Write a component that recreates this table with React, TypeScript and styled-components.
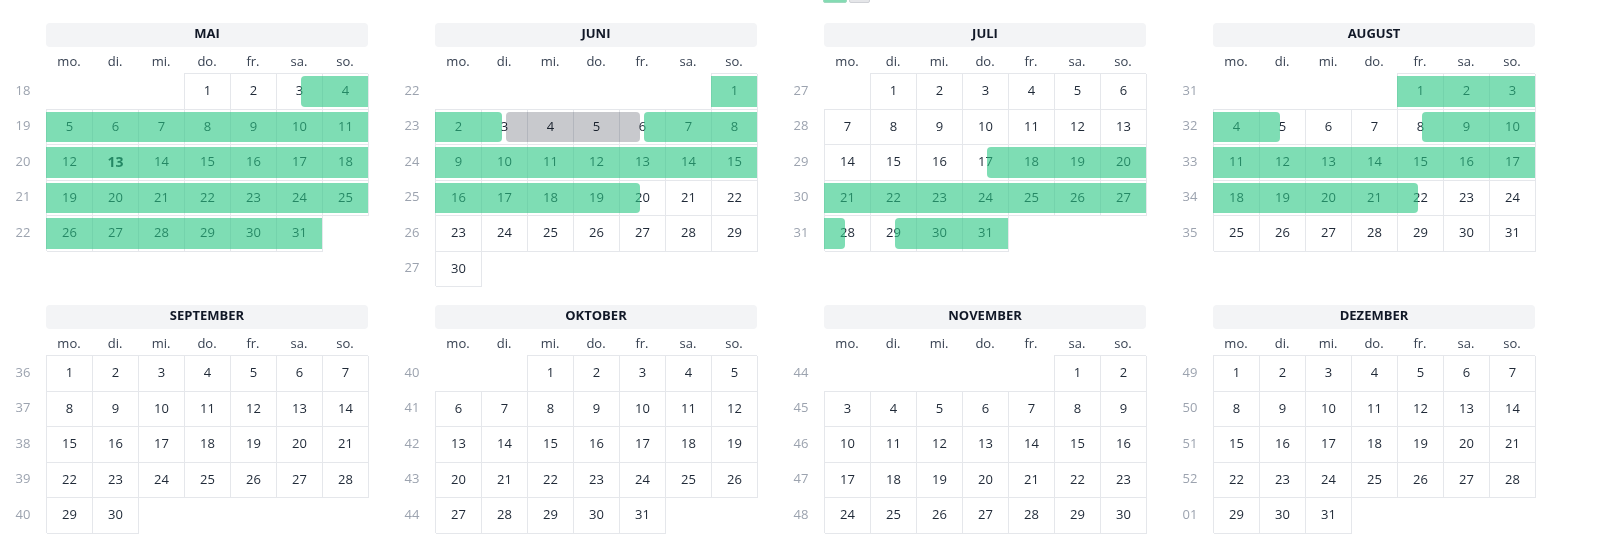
import React from 'react';
import styled, { createGlobalStyle } from 'styled-components';

const DAY = 86400000;

const GlobalStyle = createGlobalStyle`
  html, body {
    margin: 0;
    padding: 0;
    background: #ffffff;
  }
  body {
    font-family: "Open Sans", "Noto Sans", Arial, sans-serif;
    color: #1f2937;
  }
`;

const Page = styled.div`
  width: 1598px;
  height: 542px;
  overflow: hidden;
  background: #ffffff;
`;

const LegendStrip = styled.div`
  height: 3px;
  overflow: hidden;
  display: flex;
  align-items: flex-end;
  gap: 2px;
  padding-left: 823px;
`;

const LegendSwatch = styled.span<{ $tone: 'booked' | 'blocked' }>`
  display: block;
  width: ${(p) => (p.$tone === 'booked' ? '24px' : '21px')};
  height: 12px;
  box-sizing: border-box;
  border-radius: 2px;
  border: 1px solid ${(p) => (p.$tone === 'booked' ? '#9fd9bf' : '#cfd1d6')};
  background: ${(p) => (p.$tone === 'booked' ? '#84dbb3' : '#e5e6e9')};
`;

const YearGrid = styled.div`
  display: grid;
  grid-template-columns: repeat(4, 368px);
  column-gap: 21px;
  row-gap: 19px;
  padding-top: 20px;
  align-items: start;
`;

const MonthBlock = styled.section`
  display: grid;
  grid-template-columns: 46px 322px;
`;

const MonthTitle = styled.div`
  grid-column: 2;
  height: 24px;
  box-sizing: border-box;
  padding-bottom: 4px;
  display: flex;
  align-items: center;
  justify-content: center;
  background: #f3f4f6;
  border-radius: 4px;
  font-size: 13px;
  font-weight: 700;
  color: #111827;
`;

const DayNames = styled.div`
  grid-column: 2;
  height: 26px;
  box-sizing: border-box;
  padding-top: 1px;
  display: grid;
  grid-template-columns: repeat(7, 1fr);
  align-items: center;
  font-size: 13px;
  color: #374151;
  text-align: center;
`;

const WeekNumber = styled.div`
  grid-column: 1;
  height: 35.5px;
  box-sizing: border-box;
  padding-bottom: 2px;
  display: flex;
  align-items: center;
  justify-content: center;
  font-size: 13px;
  color: #9ca3af;
`;

const WeekRow = styled.div`
  grid-column: 2;
  position: relative;
  height: 35.5px;
  display: grid;
  grid-template-columns: repeat(7, 1fr);
`;

const DayCell = styled.div<{ $today?: boolean }>`
  box-sizing: border-box;
  border-left: 1px solid #e5e7eb;
  border-top: 1px solid #e5e7eb;
  box-shadow: 1px 1px 0 0 #e5e7eb;
  padding-bottom: 2px;
  display: flex;
  align-items: center;
  justify-content: center;
  color: #1f2937;
  font-weight: ${(p) => (p.$today ? 700 : 400)};
  font-size: ${(p) => (p.$today ? '14px' : '13px')};
`;

const EmptyCell = styled.div``;

const Bar = styled.div<{ $kind: 'booked' | 'blocked'; $roundL: boolean; $roundR: boolean }>`
  position: absolute;
  top: 3px;
  bottom: 2px;
  z-index: 1;
  pointer-events: none;
  background: ${(p) => (p.$kind === 'booked' ? 'rgba(40, 198, 130, 0.6)' : '#c8c9cd')};
  mix-blend-mode: ${(p) => (p.$kind === 'booked' ? 'normal' : 'multiply')};
  border-top-left-radius: ${(p) => (p.$roundL ? '4px' : '0')};
  border-bottom-left-radius: ${(p) => (p.$roundL ? '4px' : '0')};
  border-top-right-radius: ${(p) => (p.$roundR ? '4px' : '0')};
  border-bottom-right-radius: ${(p) => (p.$roundR ? '4px' : '0')};
`;

const YEAR = 2025;
const MONTH_NAMES = ['JANUAR', 'FEBRUAR', 'MÄRZ', 'APRIL', 'MAI', 'JUNI', 'JULI', 'AUGUST', 'SEPTEMBER', 'OKTOBER', 'NOVEMBER', 'DEZEMBER'];
const WEEKDAYS = ['mo.', 'di.', 'mi.', 'do.', 'fr.', 'sa.', 'so.'];

const dn = (y: number, m: number, d: number) => Date.UTC(y, m, d) / DAY;

type Booking = { from: number; to: number; kind: 'booked' | 'blocked' };

const BOOKINGS: Booking[] = [
  { from: dn(2025, 4, 3), to: dn(2025, 5, 3), kind: 'booked' },
  { from: dn(2025, 5, 3), to: dn(2025, 5, 6), kind: 'blocked' },
  { from: dn(2025, 5, 6), to: dn(2025, 5, 20), kind: 'booked' },
  { from: dn(2025, 6, 17), to: dn(2025, 6, 28), kind: 'booked' },
  { from: dn(2025, 6, 29), to: dn(2025, 7, 5), kind: 'booked' },
  { from: dn(2025, 7, 8), to: dn(2025, 7, 22), kind: 'booked' },
];

const TODAY = dn(2025, 4, 13);
const CHECK_IN = 0.54;
const CHECK_OUT = 0.46;

function isoWeek(dayNumber: number) {
  const t = new Date(dayNumber * DAY);
  const wd = t.getUTCDay() || 7;
  t.setUTCDate(t.getUTCDate() + 4 - wd);
  const yearStart = Date.UTC(t.getUTCFullYear(), 0, 1);
  return Math.ceil(((t.getTime() - yearStart) / DAY + 1) / 7);
}

type BarSeg = { left: number; width: number; kind: 'booked' | 'blocked'; roundL: boolean; roundR: boolean };
type Week = { monday: number; week: number; cells: (number | null)[]; bars: BarSeg[] };

function buildMonth(month: number): Week[] {
  const first = dn(YEAR, month, 1);
  const count = new Date(Date.UTC(YEAR, month + 1, 0)).getUTCDate();
  const end = first + count;
  const firstDow = (new Date(first * DAY).getUTCDay() + 6) % 7;
  const weeks: Week[] = [];
  for (let monday = first - firstDow; monday < end; monday += 7) {
    const cells: (number | null)[] = [];
    for (let i = 0; i < 7; i++) {
      const d = monday + i;
      cells.push(d >= first && d < end ? d : null);
    }
    const rowStart = Math.max(monday, first);
    const rowEnd = Math.min(monday + 7, end);
    const bars: BarSeg[] = [];
    BOOKINGS.forEach((b) => {
      const s = b.from + CHECK_IN;
      const e = b.to + CHECK_OUT;
      const a = Math.max(s, rowStart);
      const z = Math.min(e, rowEnd);
      if (z > a) {
        bars.push({
          left: ((a - monday) / 7) * 100,
          width: ((z - a) / 7) * 100,
          kind: b.kind,
          roundL: a === s,
          roundR: z === e,
        });
      }
    });
    weeks.push({ monday, week: isoWeek(monday), cells, bars });
  }
  return weeks;
}

function MonthView({ month }: { month: number }) {
  const weeks = buildMonth(month);
  return (
    <MonthBlock>
      <MonthTitle>{MONTH_NAMES[month]}</MonthTitle>
      <DayNames>
        {WEEKDAYS.map((w) => (
          <span key={w}>{w}</span>
        ))}
      </DayNames>
      {weeks.map((wk) => (
        <React.Fragment key={wk.monday}>
          <WeekNumber>{String(wk.week).padStart(2, '0')}</WeekNumber>
          <WeekRow>
            {wk.cells.map((c, i) =>
              c === null ? (
                <EmptyCell key={i} />
              ) : (
                <DayCell key={i} $today={c === TODAY}>
                  {new Date(c * DAY).getUTCDate()}
                </DayCell>
              )
            )}
            {wk.bars.map((b, i) => (
              <Bar
                key={'b' + i}
                $kind={b.kind}
                $roundL={b.roundL}
                $roundR={b.roundR}
                style={{ left: `${b.left}%`, width: `${b.width}%` }}
              />
            ))}
          </WeekRow>
        </React.Fragment>
      ))}
    </MonthBlock>
  );
}

export default function App() {
  const months = [4, 5, 6, 7, 8, 9, 10, 11];
  return (
    <Page>
      <GlobalStyle />
      <LegendStrip>
        <LegendSwatch $tone="booked" />
        <LegendSwatch $tone="blocked" />
      </LegendStrip>
      <YearGrid>
        {months.map((m) => (
          <MonthView key={m} month={m} />
        ))}
      </YearGrid>
    </Page>
  );
}
